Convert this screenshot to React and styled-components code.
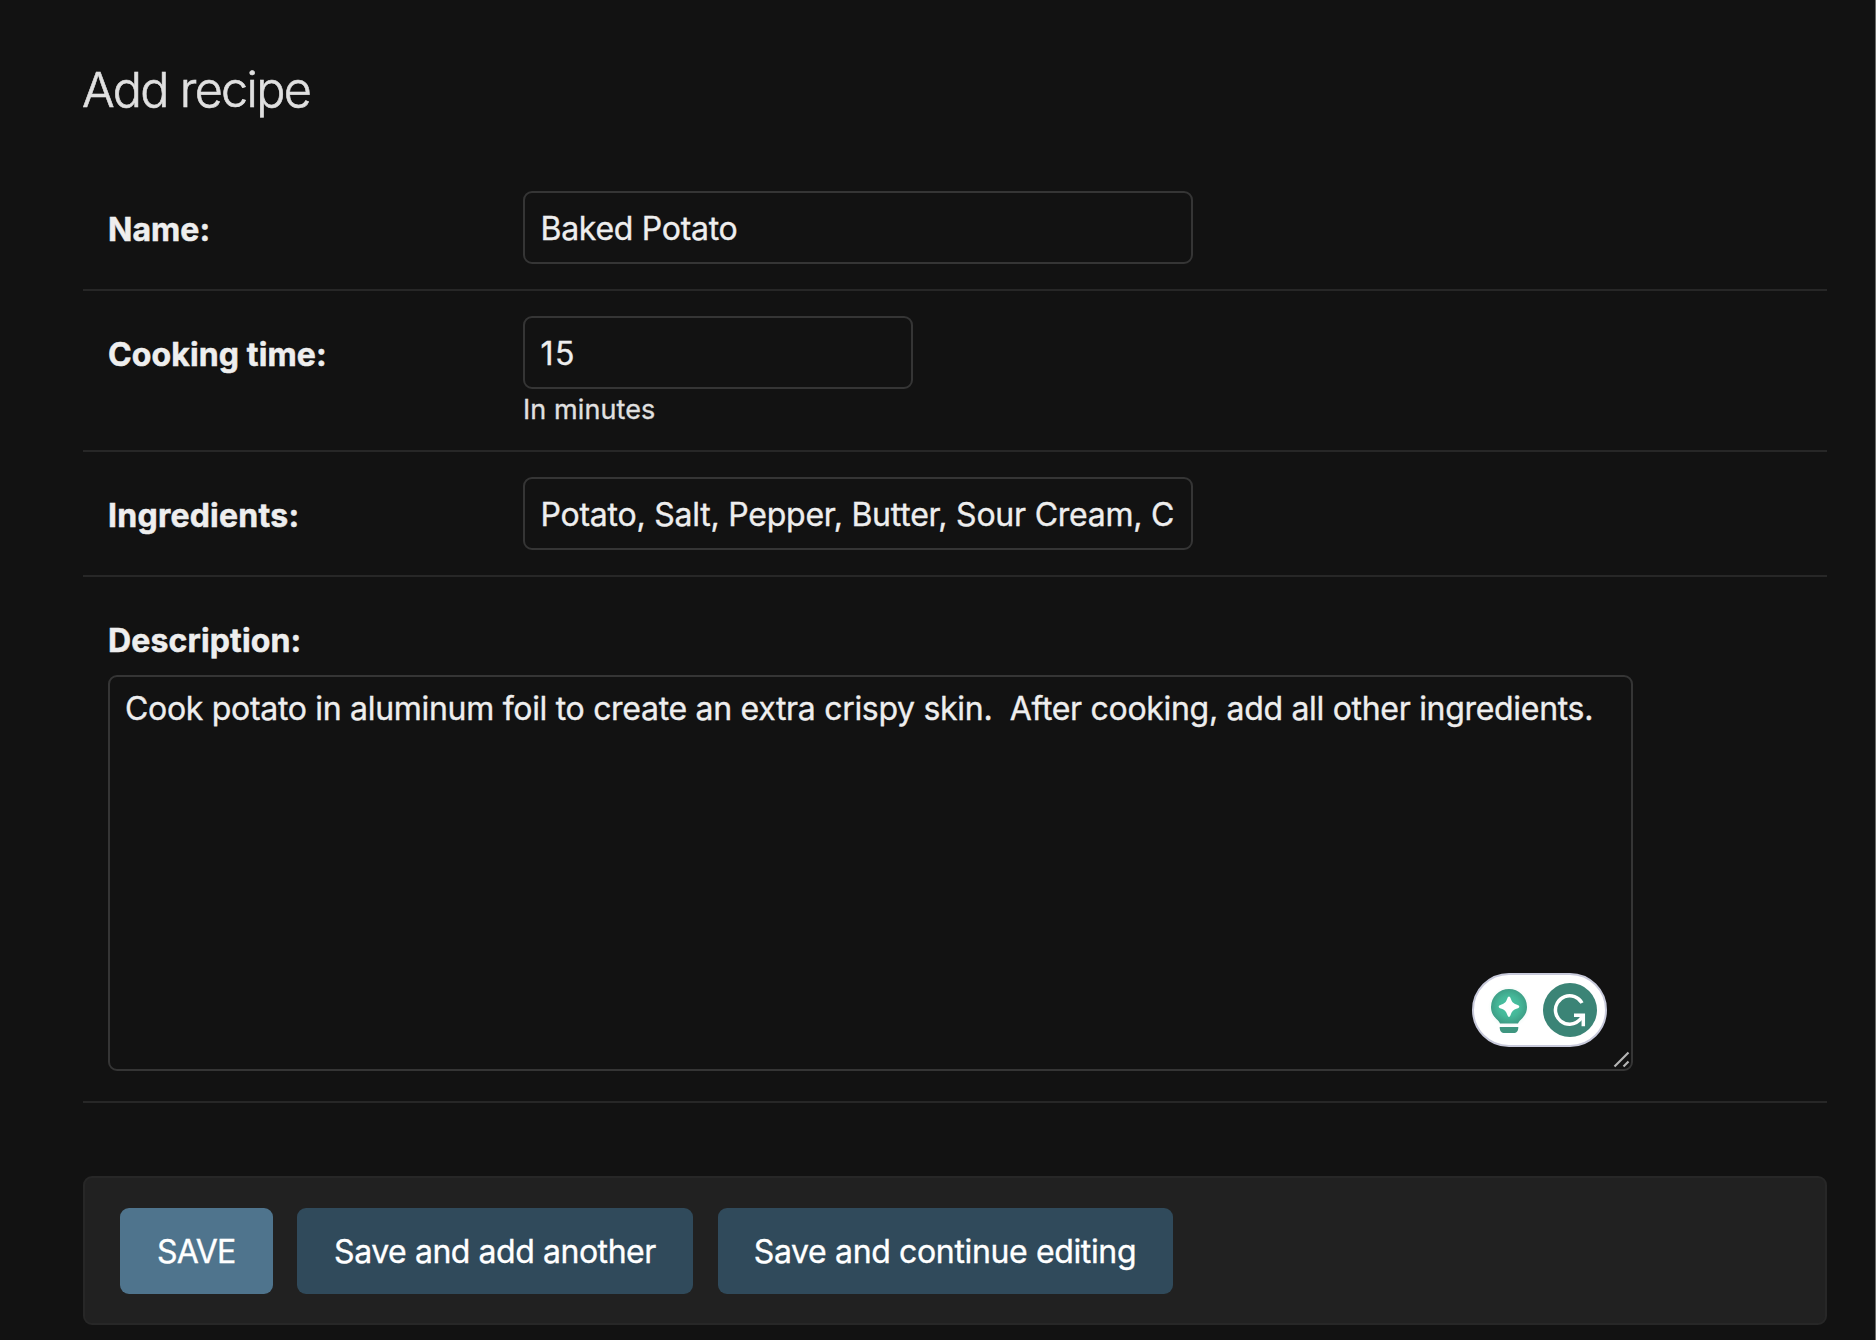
import React from "react";
import styled, { createGlobalStyle } from "styled-components";

const GlobalStyle = createGlobalStyle`
  * { box-sizing: border-box; }
  body {
    margin: 0;
    background: #121212;
    color: #eeeeee;
    font-family: Inter, "Liberation Sans", sans-serif;
    -webkit-text-stroke: 0.3px currentColor;
    overflow: hidden;
  }
`;

const Page = styled.main`
  display: flex;
  flex-direction: column;
  height: 1340px;
  padding: 61px 48px 0 83px;
  border-right: 1px solid #6b6d6a;
  overflow: hidden;
`;

const Title = styled.h1`
  margin: 0 0 48px -1px;
  height: 59px;
  line-height: 58px;
  font-size: 48.5px;
  font-weight: 300;
  letter-spacing: -1.68px;
  -webkit-text-stroke: 0.6px currentColor;
  color: #e0e0e0;
`;

const Form = styled.form`
  display: flex;
  flex-direction: column;
`;

const FormRow = styled.div`
  display: flex;
  flex-direction: ${(p) => (p.$stacked ? "column" : "row")};
  align-items: flex-start;
  height: ${(p) => p.$height}px;
  padding: ${(p) => p.$top}px 25px 0;
  border-bottom: 2px solid #272727;
`;

const Label = styled.label`
  flex: none;
  width: 415px;
  padding-top: ${(p) => (p.$stacked ? 0 : 19)}px;
  height: ${(p) => (p.$stacked ? 54 : 59)}px;
  line-height: 40px;
  font-size: 32px;
  font-weight: 700;
  letter-spacing: ${(p) => p.$spacing}px;
  -webkit-text-stroke: 0.5px currentColor;
`;

const Field = styled.div`
  display: flex;
  flex-direction: column;
`;

const TextInput = styled.input`
  width: ${(p) => p.$width}px;
  height: 73px;
  margin: 0;
  padding: 1px 14.5px 0 15.5px;
  border: 2px solid #353535;
  border-radius: 9px;
  background: #121212;
  color: #eeeeee;
  font: 400 32px Inter, sans-serif;
  letter-spacing: ${(p) => p.$spacing}px;
  -webkit-text-stroke: 0.35px currentColor;
  outline: none;
`;

const Help = styled.span`
  margin-top: 3px;
  line-height: 36px;
  font-size: 27px;
  letter-spacing: 0.1px;
  color: #e0e0e0;
`;

const Editor = styled.div`
  position: relative;
  width: 1525px;
  height: 396px;
`;

const TextArea = styled.textarea`
  display: block;
  width: 100%;
  height: 100%;
  margin: 0;
  padding: 12px 15px;
  border: 2px solid #353535;
  border-radius: 9px;
  background: #121212;
  color: #eeeeee;
  font: 400 32px/39px Inter, sans-serif;
  letter-spacing: -0.305px;
  -webkit-text-stroke: 0.35px currentColor;
  resize: none;
  outline: none;
`;

const ResizeGrip = styled.svg`
  position: absolute;
  right: 3px;
  bottom: 2px;
`;

const Assistant = styled.div`
  position: absolute;
  right: 26px;
  bottom: 24px;
  display: flex;
  align-items: center;
  gap: 13px;
  width: 135px;
  height: 74px;
  padding-left: 14px;
  border: 2.5px solid #c8cadb;
  border-radius: 37px;
  background: #ffffff;
`;

const SubmitRow = styled.div`
  display: flex;
  gap: 24.5px;
  height: 149px;
  margin-top: 73px;
  padding: 30px 35px;
  border: 2px solid #272727;
  border-radius: 9px;
  background: #212121;
`;

const Button = styled.button`
  width: ${(p) => p.$width}px;
  height: 86px;
  padding: 1px 0 0;
  border: 0;
  border-radius: 9px;
  background: ${(p) => (p.$primary ? "#4f748d" : "#304a5b")};
  color: #ffffff;
  font: 400 32px Inter, sans-serif;
  letter-spacing: ${(p) => p.$spacing}px;
  -webkit-text-stroke: 0.35px currentColor;
`;

function Bulb() {
  return (
    <svg width="42" height="54" viewBox="0 0 42 54">
      <defs>
        <radialGradient id="bulb" cx="50%" cy="50%" r="55%">
          <stop offset="0" stopColor="#48c7a8" />
          <stop offset="0.55" stopColor="#45b798" />
          <stop offset="1" stopColor="#3c9982" />
        </radialGradient>
        <radialGradient id="halo">
          <stop offset="0.7" stopColor="#edf7f4" />
          <stop offset="1" stopColor="#ffffff" />
        </radialGradient>
      </defs>
      <circle cx="21" cy="24" r="21" fill="url(#halo)" />
      <path
        d="M21 6a18 18 0 0 1 18 18c0 7-4 10.500-7 13.500-1 1-1.500 2-2 3H12c-.5-1-1-2-2-3C7 34.500 3 31 3 24A18 18 0 0 1 21 6Z"
        fill="url(#bulb)"
      />
      <path d="M11.700 44h18.600c0 4-1.500 6-5 6h-8.600c-3.500 0-5-2-5-6Z" fill="#3f9680" />
      <path
        d="M21 13.500c.8 0 1.200.7 1.600 1.800 1.400 3.900 2.500 5 6.500 6.500 1.400.6 2.200 1 2.200 1.900s-.8 1.300-2.200 1.900c-4 1.500-5.100 2.600-6.500 6.500-.4 1.100-.8 1.800-1.600 1.800s-1.200-.7-1.600-1.800c-1.400-3.900-2.500-5-6.500-6.500-1.400-.6-2.200-1-2.200-1.900s.8-1.300 2.200-1.900c4-1.500 5.100-2.600 6.500-6.500.4-1.100.8-1.800 1.600-1.800Z"
        fill="#ffffff"
      />
    </svg>
  );
}

function LetterMark() {
  return (
    <svg width="54" height="54" viewBox="0 0 54 54">
      <circle cx="27" cy="27" r="27" fill="#3b8476" />
      <g fill="none" stroke="#ffffff" strokeWidth="3.500">
        <path d="M39 20A14.200 14.200 0 1 0 27 41.200C33 41.200 36.500 38 40.500 32.500" />
        <path d="M31 32.300h9.300v10.900" />
      </g>
    </svg>
  );
}

export default function App() {
  return (
    <Page>
      <GlobalStyle />
      <Title>Add recipe</Title>
      <Form>
        <FormRow $height={122.5} $top={23}>
          <Label $spacing={0.04}>Name:</Label>
          <Field>
            <TextInput $width={670} $spacing={-0.28} defaultValue="Baked Potato" />
          </Field>
        </FormRow>
        <FormRow $height={161.5} $top={25.5}>
          <Label $spacing={0.12}>Cooking time:</Label>
          <Field>
            <TextInput $width={390} $spacing={1.4} defaultValue="15" />
            <Help>In minutes</Help>
          </Field>
        </FormRow>
        <FormRow $height={125} $top={25}>
          <Label $spacing={0.25}>Ingredients:</Label>
          <Field>
            <TextInput
              $width={670}
              $spacing={-0.235}
              defaultValue="Potato, Salt, Pepper, Butter, Sour Cream, C"
            />
          </Field>
        </FormRow>
        <FormRow $stacked $height={526} $top={44}>
          <Label $stacked $spacing={0.15}>Description:</Label>
          <Editor>
            <TextArea
              spellCheck={false}
              defaultValue="Cook potato in aluminum foil to create an extra crispy skin.  After cooking, add all other ingredients."
            />
            <Assistant>
              <Bulb />
              <LetterMark />
            </Assistant>
            <ResizeGrip width="18" height="18" viewBox="0 0 18 18">
              <path d="M2.500 15.500 16.500 1.500M11.500 15.500l5-5" stroke="#b5b5b5" strokeWidth="2.200" />
            </ResizeGrip>
          </Editor>
        </FormRow>
        <SubmitRow>
          <Button type="button" $primary $width={152.5} $spacing={-0.8}>SAVE</Button>
          <Button type="button" $width={396} $spacing={-0.45}>Save and add another</Button>
          <Button type="button" $width={455} $spacing={-0.36}>Save and continue editing</Button>
        </SubmitRow>
      </Form>
    </Page>
  );
}
